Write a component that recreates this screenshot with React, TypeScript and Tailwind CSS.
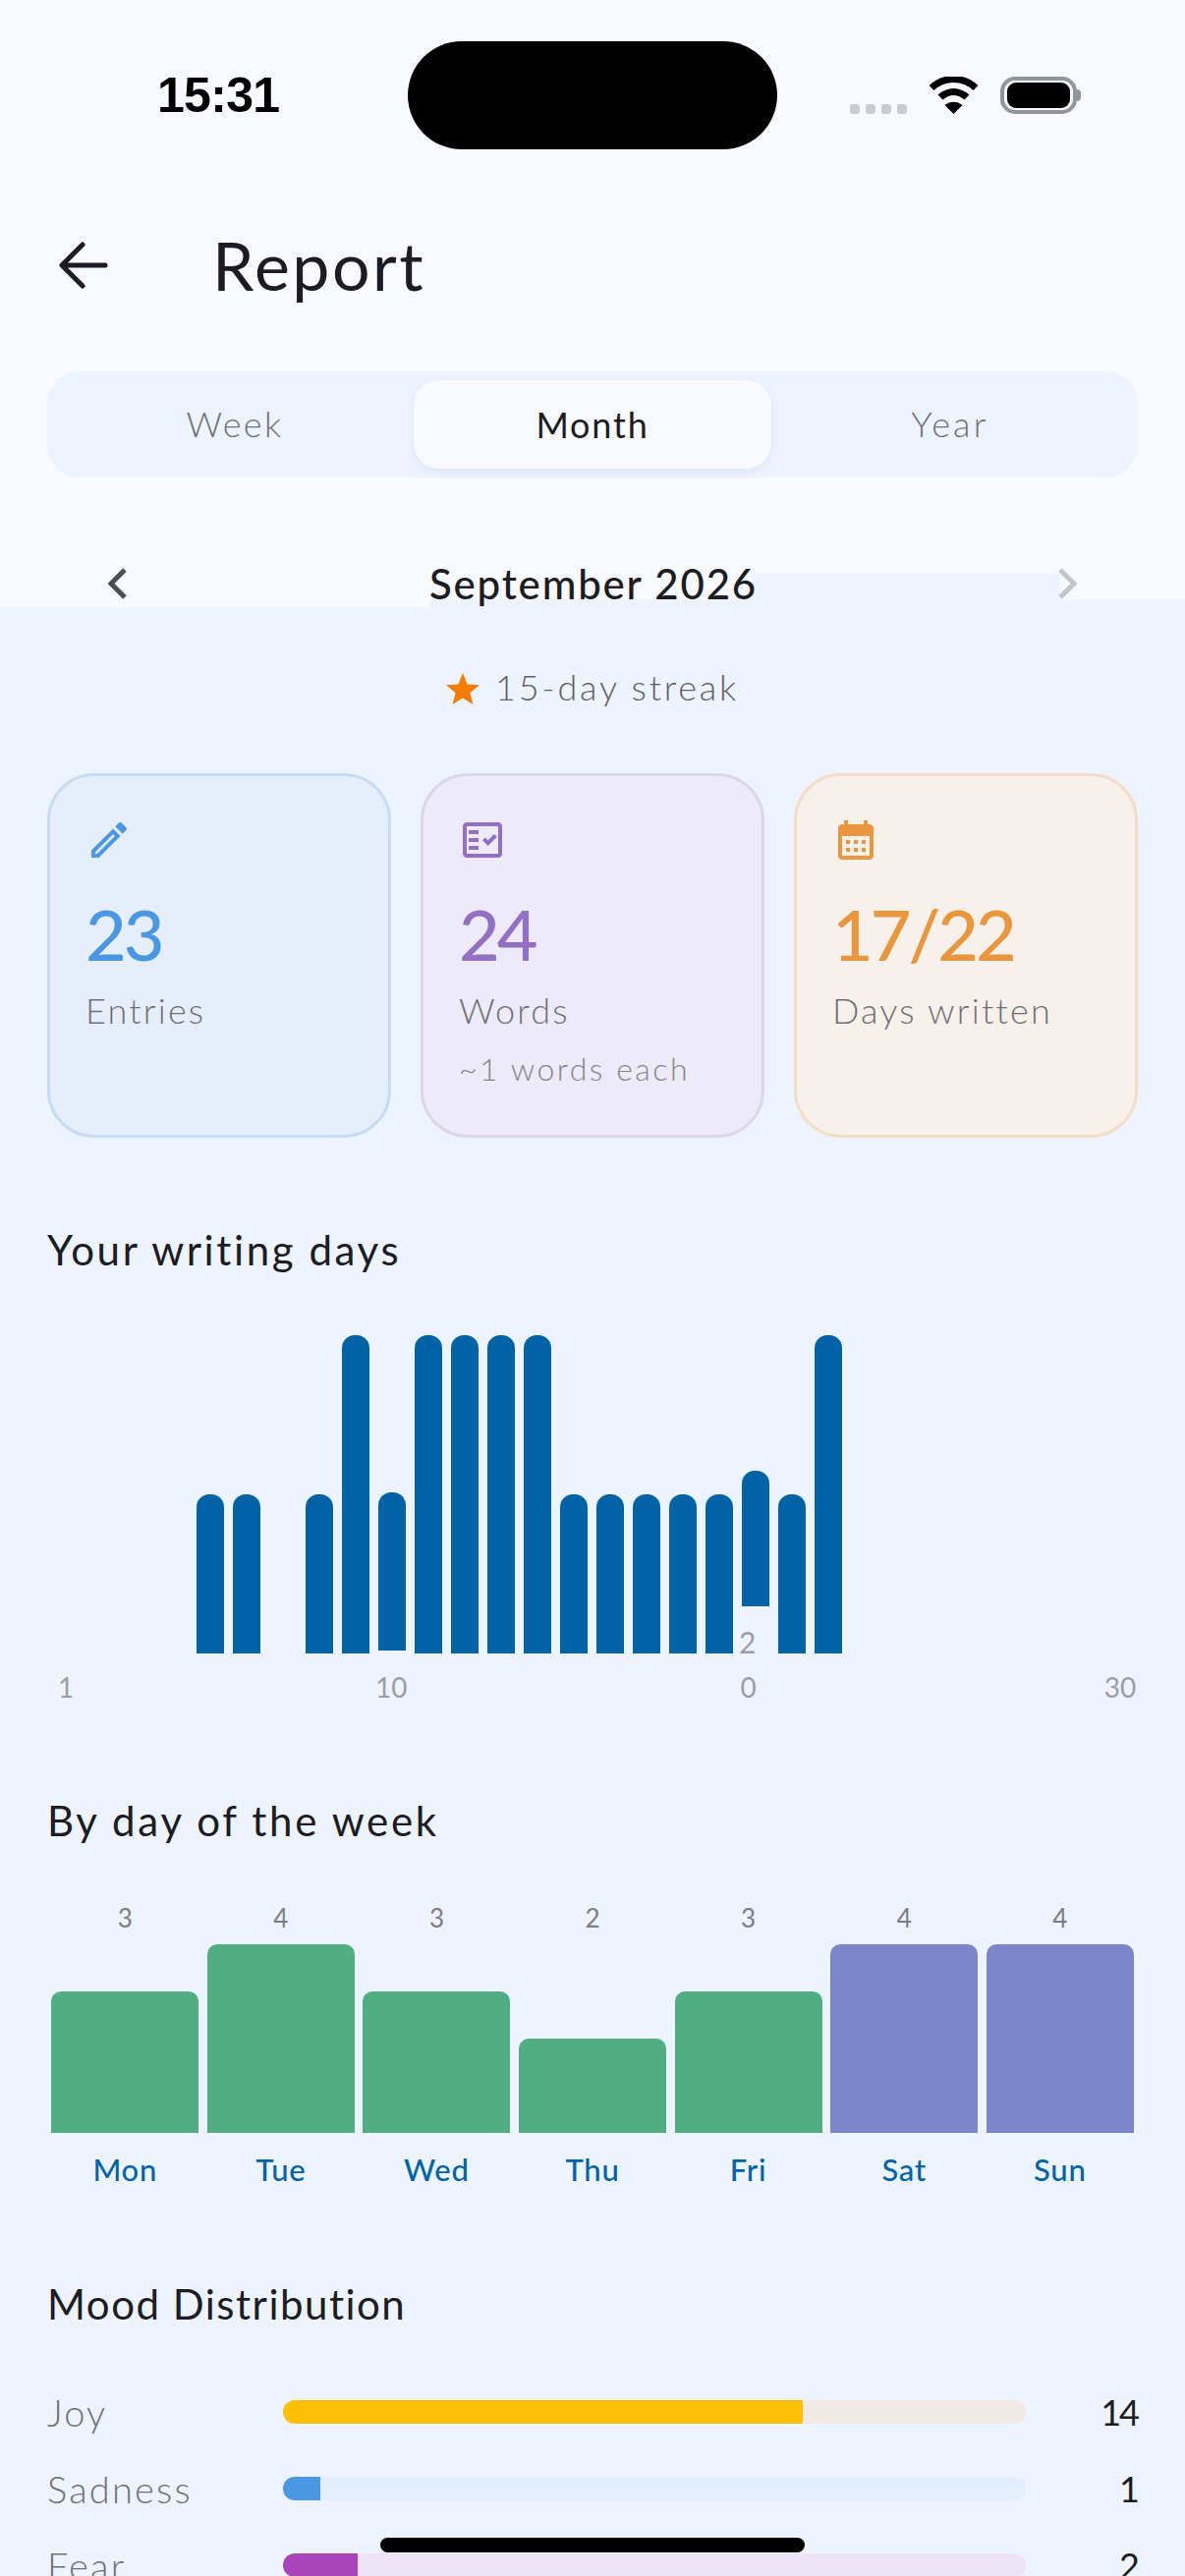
const writingDays = [
  { key: 1, bar: "" },
  { key: 2, bar: "" },
  { key: 3, bar: "" },
  { key: 4, bar: "" },
  { key: 5, bar: "h-[162px]" },
  { key: 6, bar: "h-[162px]" },
  { key: 7, bar: "" },
  { key: 8, bar: "h-[162px]" },
  { key: 9, bar: "h-[324px]" },
  { key: 10, bar: "h-[161px] mb-[3px]" },
  { key: 11, bar: "h-[324px]" },
  { key: 12, bar: "h-[324px]" },
  { key: 13, bar: "h-[324px]" },
  { key: 14, bar: "h-[324px]" },
  { key: 15, bar: "h-[162px]" },
  { key: 16, bar: "h-[162px]" },
  { key: 17, bar: "h-[162px]" },
  { key: 18, bar: "h-[162px]" },
  { key: 19, bar: "h-[162px]" },
  { key: 20, bar: "h-[138px] mb-[48px]" },
  { key: 21, bar: "h-[162px]" },
  { key: 22, bar: "h-[324px]" },
];

const weekDays = [
  { day: "Mon", count: 3, bar: "h-[144px] bg-[#4fae82]" },
  { day: "Tue", count: 4, bar: "h-[192px] bg-[#4fae82]" },
  { day: "Wed", count: 3, bar: "h-[144px] bg-[#4fae82]" },
  { day: "Thu", count: 2, bar: "h-[96px] bg-[#4fae82]" },
  { day: "Fri", count: 3, bar: "h-[144px] bg-[#4fae82]" },
  { day: "Sat", count: 4, bar: "h-[192px] bg-[#7b86ca]" },
  { day: "Sun", count: 4, bar: "h-[192px] bg-[#7b86ca]" },
];

const moods = [
  { name: "Joy", count: 14, track: "bg-[#f0e9e6]", fill: "w-[70%] bg-[#ffc107]" },
  { name: "Sadness", count: 1, track: "bg-[#e3eefc]", fill: "w-[5%] bg-[#4a98e3]" },
  { name: "Fear", count: 2, track: "bg-[#eee3f5]", fill: "w-[10%] bg-[#a945b8]" },
];

function PencilIcon() {
  return (
    <svg width="48" height="48" viewBox="0 0 24 24" fill="#4a98e3">
      <path d="M14.06 9.02l.92.92L5.92 19H5v-.92l9.06-9.06M17.66 3c-.25 0-.51.1-.7.29l-1.83 1.83 3.75 3.75 1.83-1.83c.39-.39.39-1.02 0-1.41l-2.34-2.34c-.2-.2-.45-.29-.71-.29zm-3.6 3.19L3 17.25V21h3.75L17.81 9.94l-3.75-3.75z" />
    </svg>
  );
}

function ChecklistIcon() {
  return (
    <svg width="48" height="48" viewBox="0 0 24 24" fill="#9270c4">
      <path fillRule="evenodd" d="M20 3H4c-1.1 0-2 .9-2 2v14c0 1.1.9 2 2 2h16c1.1 0 2-.9 2-2V5c0-1.1-.9-2-2-2zm0 16H4V5h16v14z" />
      <path d="M19.41 10.42L17.99 9l-3.17 3.17-1.41-1.42L12 12.16 14.82 15zM5 7h5v2H5zM5 11h5v2H5zM5 15h5v2H5z" />
    </svg>
  );
}

function CalendarIcon() {
  return (
    <svg width="48" height="48" viewBox="0 0 24 24" fill="#e9963c">
      <path fillRule="evenodd" d="M19 4h-1V2h-2v2H8V2H6v2H5c-1.11 0-1.99.9-1.99 2L3 20c0 1.1.89 2 2 2h14c1.1 0 2-.9 2-2V6c0-1.1-.9-2-2-2zm0 16H5V10h14v10zM9 14H7v-2h2v2zm4 0h-2v-2h2v2zm4 0h-2v-2h2v2zm-8 4H7v-2h2v2zm4 0h-2v-2h2v2zm4 0h-2v-2h2v2z" />
    </svg>
  );
}

function StatCard({
  tone,
  icon,
  value,
  valueColor,
  label,
  note,
}: {
  tone: string;
  icon: React.ReactNode;
  value: string;
  valueColor: string;
  label: string;
  note?: string;
}) {
  return (
    <div className={`h-[371px] w-[350px] rounded-[48px] border-[3px] px-[36px] pt-[41px] ${tone}`}>
      {icon}
      <div className={`mt-[29px] text-[72px] leading-[84px] font-medium tracking-[-3px] ${valueColor}`}>{value}</div>
      <div className="mt-[13px] text-[36px] leading-[46px] font-light tracking-[2.2px] text-[#6f7079]">{label}</div>
      {note && <div className="mt-[14px] text-[32px] leading-[46px] font-light tracking-[2.5px] text-[#85878c]">{note}</div>}
    </div>
  );
}

export default function App() {
  return (
    <div className="relative h-[2622px] w-[1206px] overflow-hidden bg-[#eef4ff] font-['Lato',sans-serif] text-[#1c1c22]">
      <div className="h-[564px] bg-[#f9faff]">
        {/* status bar */}
        <div className="flex h-[194px] items-start">
          <div className="ml-[160px] mt-[66px] w-[123px] font-['Liberation_Sans',sans-serif] text-[50px] leading-[62px] font-bold tracking-[-0.7px] text-black">
            15:31
          </div>
          <div className="ml-[132px] mt-[42px] h-[110px] w-[376px] rounded-[55px] bg-black" />
          <div className="ml-[74px] mt-[78px] flex items-start">
            <div className="mt-[28px] flex gap-[6px]">
              <div className="h-[10px] w-[10px] rounded-[3px] bg-[#c9cad6]" />
              <div className="h-[10px] w-[10px] rounded-[3px] bg-[#c9cad6]" />
              <div className="h-[10px] w-[10px] rounded-[3px] bg-[#c9cad6]" />
              <div className="h-[10px] w-[10px] rounded-[3px] bg-[#c9cad6]" />
            </div>
            <svg className="ml-[22px]" width="51" height="38" viewBox="0 0 51 38" fill="none">
              <path d="M3 11.5C16 -0.5 35 -0.5 48 11.5" stroke="#000" strokeWidth="7" />
              <path d="M12 21C20 13.5 31 13.5 39 21" stroke="#000" strokeWidth="7" />
              <path d="M25.5 38L16.5 29C21.5 24.5 29.5 24.5 34.5 29Z" fill="#000" />
            </svg>
            <div className="ml-[22px] flex items-center">
              <div className="flex h-[38px] w-[78px] items-center justify-center rounded-[15px] border-[4px] border-[#8f979c]">
                <div className="h-[26px] w-[64px] rounded-[9px] bg-black" />
              </div>
              <div className="h-[12px] w-[4px] rounded-r-[4px] bg-[#8f979c]" />
            </div>
          </div>
        </div>

        {/* header */}
        <div className="flex h-[152px] items-center pl-[60px]">
          <svg width="50" height="48" viewBox="0 0 50 48" fill="none" stroke="#1c1c22" strokeWidth="5" strokeLinecap="round" strokeLinejoin="round">
            <path d="M47 24H4M24 3L3 24L24 45" />
          </svg>
          <h1 className="ml-[106px] text-[68px] leading-[76px] font-normal tracking-[2.5px]">Report</h1>
        </div>

        {/* range tabs */}
        <div className="mx-[48px] mt-[32px] flex h-[108px] items-center rounded-[32px] bg-[#eef4ff] px-[9px]">
          <div className="-mt-[2px] flex-1 text-center text-[36px] font-light tracking-[2.4px] text-[#6f7079]">Week</div>
          <div className="flex h-[90px] w-[364px] items-center justify-center rounded-[26px] bg-[#f9faff] text-[36px] tracking-[1.8px] shadow-[0_4px_12px_rgba(100,130,200,0.12)]">
            Month
          </div>
          <div className="-mt-[2px] flex-1 text-center text-[36px] font-light tracking-[3.2px] text-[#6f7079]">Year</div>
        </div>
      </div>

      {/* month switcher: the lighter header band ends unevenly behind this row */}
      <div className="flex h-[55px] items-start">
        <div className="h-[55px] w-[437px] bg-[#f9faff] pl-[108px] pt-[13px]">
          <svg width="22" height="34" viewBox="0 0 22 34" fill="none" stroke="#4a4e56" strokeWidth="5">
            <path d="M19 3L5 17L19 31" />
          </svg>
        </div>
        <div className="h-[46px] w-[329px] bg-[#f9faff] text-center text-[42px] leading-[60px] font-medium tracking-[1.8px] whitespace-nowrap">
          September 2026
        </div>
        <div className="h-[20px] w-[313px] bg-[#f9faff]" />
        <div className="h-[46px] flex-1 bg-[#f9faff] pt-[13px]">
          <svg width="22" height="34" viewBox="0 0 22 34" fill="none" stroke="#c4c4cf" strokeWidth="5" className="-ml-[3px]">
            <path d="M3 3L17 17L3 31" />
          </svg>
        </div>
      </div>

      <div className="mt-[61px] flex h-[42px] items-center justify-center">
        <svg width="34" height="32" viewBox="0 0 34 32">
          <path d="M17 0L21.6 11.4L34 12.3L24.4 20.2L27.5 32L17 25.5L6.5 32L9.6 20.2L0 12.3L12.4 11.4Z" fill="#f57c00" />
        </svg>
        <span className="ml-[16px] -mt-[4px] text-[36px] font-light tracking-[2.8px] text-[#5f6068]">15-day streak</span>
      </div>

      <div className="mx-[48px] mt-[65px] flex gap-[30px]">
        <StatCard tone="border-[#c6dcf4] bg-[#e6eefc]" icon={<PencilIcon />} value="23" valueColor="text-[#4a98e3]" label="Entries" />
        <StatCard tone="border-[#dcd7e8] bg-[#edeaf9]" icon={<ChecklistIcon />} value="24" valueColor="text-[#9270c4]" label="Words" note="~1 words each" />
        <StatCard tone="border-[#f4dcc5] bg-[#f8f1eb]" icon={<CalendarIcon />} value="17/22" valueColor="text-[#e9963c]" label="Days written" />
      </div>

      {/* writing days */}
      <h2 className="ml-[48px] mt-[90px] text-[42px] leading-[48px] font-normal tracking-[2.6px]">Your writing days</h2>
      <div className="relative ml-[52px] mt-[63px] flex h-[324px] items-end">
        {writingDays.map((d) => (
          <div key={d.key} className="flex w-[37px] justify-start">
            {d.bar && <div className={`w-[28px] rounded-t-[13px] bg-[#0063a6] ${d.bar}`} />}
          </div>
        ))}
        <span className="absolute left-[700px] bottom-[-3px] text-[30px] leading-[30px] text-[#9c9ca5]">2</span>
      </div>
      <div className="ml-[59px] mt-[17px] flex text-[28px] leading-[34px] text-[#9c9ca5]">
        <span className="w-[8px]">1</span>
        <span className="ml-[315px]">10</span>
        <span className="ml-[339px]">0</span>
        <span className="ml-[354px]">30</span>
      </div>

      {/* day of week */}
      <h2 className="ml-[48px] mt-[95px] text-[42px] leading-[48px] font-normal tracking-[2.7px]">By day of the week</h2>
      <div className="mx-[48px] mt-[62px] flex h-[232px]">
        {weekDays.map((d) => (
          <div key={d.day} className="flex flex-1 flex-col items-center justify-between">
            <span className="text-[26px] leading-[27px] text-[#7c7c86]">{d.count}</span>
            <div className={`w-[150px] rounded-t-[10px] ${d.bar}`} />
          </div>
        ))}
      </div>
      <div className="mx-[48px] mt-[18px] flex">
        {weekDays.map((d) => (
          <span key={d.day} className="flex-1 text-center text-[31px] leading-[38px] font-medium tracking-[0.8px] text-[#0063a6]">
            {d.day}
          </span>
        ))}
      </div>

      {/* moods */}
      <h2 className="ml-[48px] mt-[93px] text-[42px] leading-[50px] font-normal tracking-[1.5px]">Mood Distribution</h2>
      <div className="mx-[48px] mt-[62px] flex flex-col gap-[32px]">
        {moods.map((m) => (
          <div key={m.name} className="flex h-[46px] items-center">
            <span className="w-[240px] text-[38px] font-light tracking-[2.2px] text-[#6f7079]">{m.name}</span>
            <div className={`h-[24px] w-[756px] overflow-hidden rounded-full ${m.track}`}>
              <div className={`h-full ${m.fill}`} />
            </div>
            <span className="flex-1 text-right text-[36px] tracking-[-2px]">{m.count}</span>
          </div>
        ))}
      </div>

      <div className="absolute left-[387px] top-[2583px] h-[15px] w-[432px] rounded-full bg-black" />
    </div>
  );
}
